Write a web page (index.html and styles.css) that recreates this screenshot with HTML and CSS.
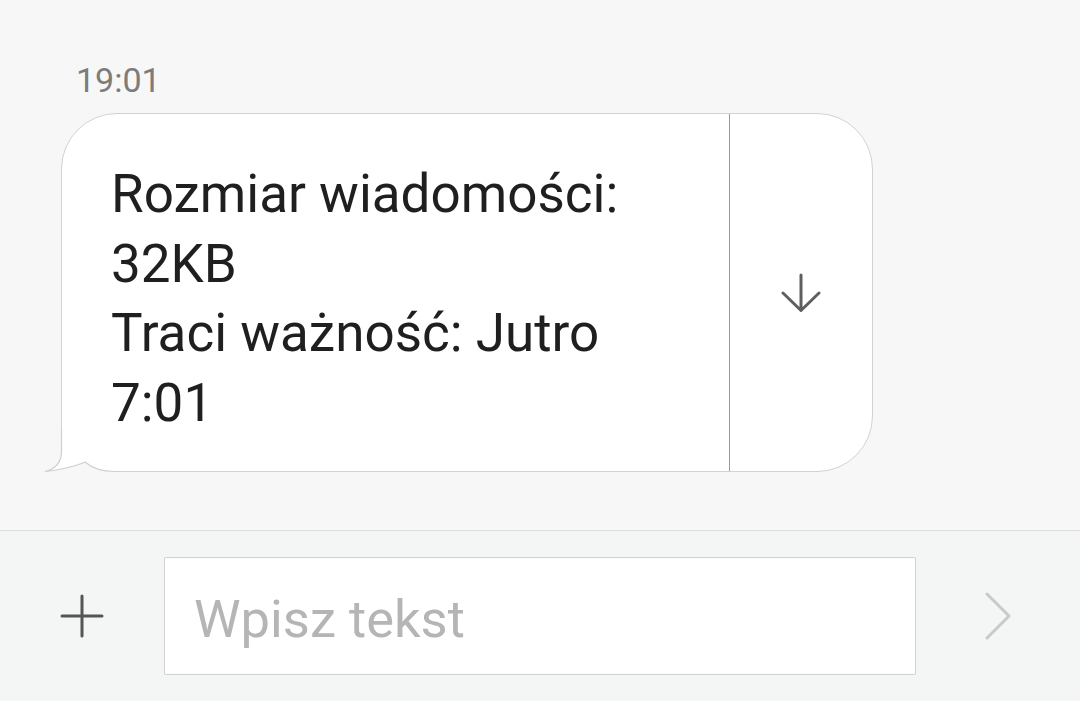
FILE: index.html
```html
<!DOCTYPE html>
<html lang="pl">
<head>
<meta charset="utf-8">
<title>Wiadomość</title>
<link rel="stylesheet" href="styles.css">
</head>
<body>
<main class="thread">
  <div class="time">19:01</div>
  <div class="bubble">
    <div class="bubble-text">Rozmiar wiadomości: 32KB<br>Traci ważność: Jutro 7:01</div>
    <div class="bubble-action">
      <svg class="icon-down" width="40" height="40" viewBox="0 0 40 40" aria-hidden="true">
        <path d="M20 2 V37 M2 20 L20 37.5 L38 20" fill="none" stroke="#5f5f5f" stroke-width="3" stroke-linecap="round" stroke-linejoin="round"/>
      </svg>
    </div>
    <svg class="tail" width="76" height="44" viewBox="0 0 76 44" aria-hidden="true">
      <rect x="0" y="14" width="76" height="30" fill="#f7f7f7"/>
      <path d="M17.5 0 V22 C17.5 34 12 40 1 42.5 C12 41.5 30 38 41 33 C48 39 56 42.5 71 42.5 H76 V0 Z" fill="#ffffff"/>
      <path d="M17.5 0 V22 C17.5 34 12 40 1 42.5 C12 41.5 30 38 41 33 C48 39 56 42.5 71 42.5 H76" fill="none" stroke="#cfcfcf" stroke-width="1.2"/>
    </svg>
  </div>
</main>
<footer class="composer">
  <div class="side-btn">
    <svg width="44" height="44" viewBox="0 0 44 44" aria-hidden="true">
      <path d="M2 22 H42 M22 2 V42" fill="none" stroke="#555555" stroke-width="3" stroke-linecap="round"/>
    </svg>
  </div>
  <div class="input">Wpisz tekst</div>
  <div class="side-btn">
    <svg width="30" height="50" viewBox="0 0 30 50" aria-hidden="true">
      <path d="M4 3 L26 25 L4 47" fill="none" stroke="#c9c9c9" stroke-width="3" stroke-linecap="round" stroke-linejoin="round"/>
    </svg>
  </div>
</footer>
</body>
</html>
```
FILE: styles.css
```css
* { box-sizing: border-box; }
html, body {
  margin: 0;
  padding: 0;
}
body {
  width: 1080px;
  height: 701px;
  overflow: hidden;
  background: #f7f7f7;
  font-family: Roboto, "Noto Sans", "Liberation Sans", sans-serif;
  display: flex;
  flex-direction: column;
}
.thread {
  height: 531px;
  padding-top: 60px;
  border-bottom: 1px solid #dedede;
}
.time {
  margin-left: 76px;
  font-size: 34px;
  line-height: 40px;
  color: #7c7c7c;
  margin-bottom: 13px;
}
.bubble {
  position: relative;
  margin-left: 61px;
  width: 812px;
  height: 359px;
  background: #ffffff;
  border: 1px solid #d2d2d2;
  border-radius: 56px 56px 56px 0;
  display: flex;
}
.bubble-text {
  width: 668px;
  border-right: 1px solid #9a9a9a;
  padding: 46px 58px 0 49px;
  font-size: 53px;
  line-height: 69.5px;
  color: #1f1f1f;
}
.bubble-action {
  flex: 1;
  display: flex;
  align-items: center;
  justify-content: center;
}
.tail {
  position: absolute;
  left: -18px;
  bottom: -2px;
  display: block;
}
.composer {
  flex: 1;
  background: #f4f5f5;
  display: flex;
  align-items: center;
}
.side-btn {
  width: 164px;
  display: flex;
  align-items: center;
  justify-content: center;
}
.input {
  width: 752px;
  height: 118px;
  background: #ffffff;
  border: 1px solid #d0d0d0;
  border-radius: 2px;
  display: flex;
  align-items: center;
  padding: 6px 0 0 29px;
  font-size: 52.5px;
  color: #b5b5b5;
}
```
